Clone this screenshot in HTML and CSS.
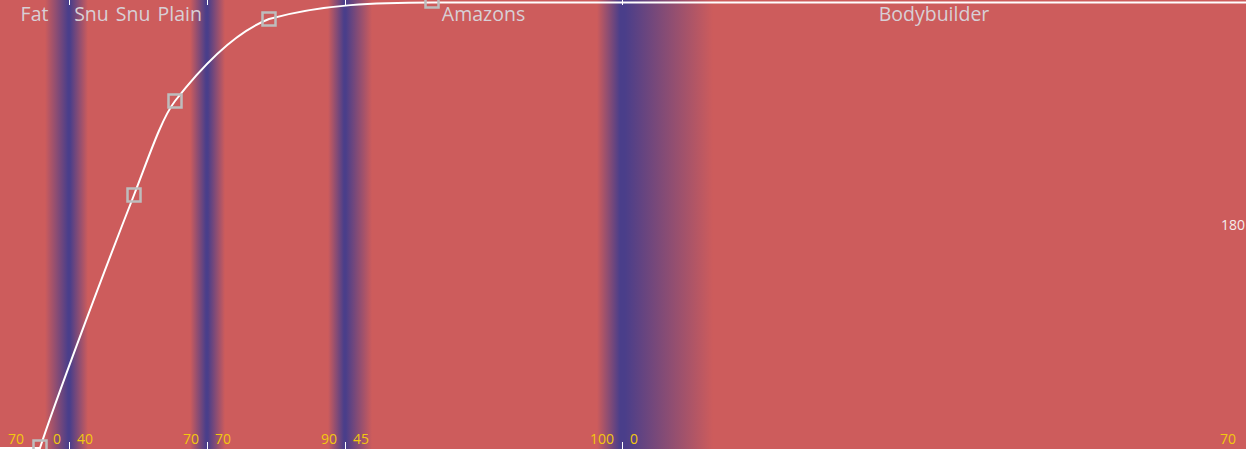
FILE: index.html
```html
<!DOCTYPE html>
<html lang="en">
<head>
    <meta charset="UTF-8">
    <meta name="viewport" content="width=device-width, initial-scale=1.0">
    <title>Body Shape Curve</title>
    <link rel="stylesheet" href="styles.css">
</head>
<body>
    <div class="chart">
        <div class="segments">
            <div class="segment seg-fat">
                <div class="seg-name">Fat</div>
                <div class="seg-values"><span>70</span><span>0</span></div>
            </div>
            <div class="segment seg-snu">
                <div class="seg-name">Snu Snu Plain</div>
                <div class="seg-values"><span>40</span><span>70</span></div>
            </div>
            <div class="segment seg-plain">
                <div class="seg-name"></div>
                <div class="seg-values"><span>70</span><span>90</span></div>
            </div>
            <div class="segment seg-amazons">
                <div class="seg-name">Amazons</div>
                <div class="seg-values"><span>45</span><span>100</span></div>
            </div>
            <div class="segment seg-body">
                <div class="seg-name">Bodybuilder</div>
                <div class="seg-values"><span>0</span><span>70</span></div>
            </div>
        </div>

        <!-- curve, ticks and control points -->
        <svg class="overlay" width="1246" height="449" viewBox="0 0 1246 449">
            <g class="ticks">
                <line x1="69.5" y1="0" x2="69.5" y2="5"/>
                <line x1="207.5" y1="0" x2="207.5" y2="5"/>
                <line x1="345.5" y1="0" x2="345.5" y2="5"/>
                <line x1="622.5" y1="0" x2="622.5" y2="5"/>
                <line x1="69.5" y1="442" x2="69.5" y2="449"/>
                <line x1="207.5" y1="442" x2="207.5" y2="449"/>
                <line x1="345.5" y1="442" x2="345.5" y2="449"/>
                <line x1="622.5" y1="442" x2="622.5" y2="449"/>
            </g>
            <path class="curve" d="M0 448 L40 448 C55 402 103 274 134 195 C147.7 160 161.3 118.8 175 101 C206 61 238 31 269 19 C323 4 378 2.5 432 2.5 L1246 2.5"/>
            <g class="points">
                <rect x="33.5" y="440.5" width="13" height="13"/>
                <rect x="127.5" y="188.5" width="13" height="13"/>
                <rect x="168.5" y="94.5" width="13" height="13"/>
                <rect x="262.5" y="12.5" width="13" height="13"/>
                <rect x="425.5" y="-5.5" width="13" height="13"/>
            </g>
        </svg>

        <div class="axis-max">180</div>
    </div>
</body>
</html>
```

FILE: styles.css
```css
body {
    margin: 0;
    background-color: #cd5c5c;
    font-family: "Open Sans", "Noto Sans", sans-serif;
}

.chart {
    position: relative;
    width: 1246px;
    height: 449px;
    overflow: hidden;
    background: linear-gradient(to right,
        #cd5c5c 0px, #cd5c5c 45px, #4a3e8a 68px, #4a3e8a 70px, #cd5c5c 88px,
        #cd5c5c 190px, #4a3e8a 206px, #4a3e8a 208px, #cd5c5c 225px,
        #cd5c5c 328px, #4a3e8a 344px, #4a3e8a 346px, #cd5c5c 372px,
        #cd5c5c 597px, #4a3e8a 620px, #4a3e8a 625px, #cd5c5c 713px,
        #cd5c5c 1246px);
}

.segments {
    display: flex;
    height: 100%;
}

.segment {
    display: flex;
    flex-direction: column;
    justify-content: space-between;
}

.seg-fat { width: 69px; }
.seg-snu { width: 138px; }
.seg-plain { width: 138px; }
.seg-amazons { width: 277px; }
.seg-body { width: 624px; }

.seg-name {
    text-align: center;
    font-size: 19.5px;
    line-height: 24px;
    padding-top: 2px;
    word-spacing: 2px;
    color: #d8d0d6;
    white-space: nowrap;
}

.seg-values {
    display: flex;
    justify-content: space-between;
    padding: 0 8px 1px 8px;
    font-size: 14px;
    line-height: 18px;
    color: #f2c80f;
}

.seg-body .seg-values {
    padding-right: 10px;
}

.overlay {
    position: absolute;
    left: 0;
    top: 0;
}

.ticks line {
    stroke: #ffffff;
    stroke-width: 1;
}

.curve {
    fill: none;
    stroke: #ffffff;
    stroke-width: 2;
}

.points rect {
    fill: none;
    stroke: #bdbdbd;
    stroke-width: 2.5;
}

.axis-max {
    position: absolute;
    right: 1px;
    top: 215px;
    font-size: 14px;
    line-height: 20px;
    color: #f4ecec;
}
```
